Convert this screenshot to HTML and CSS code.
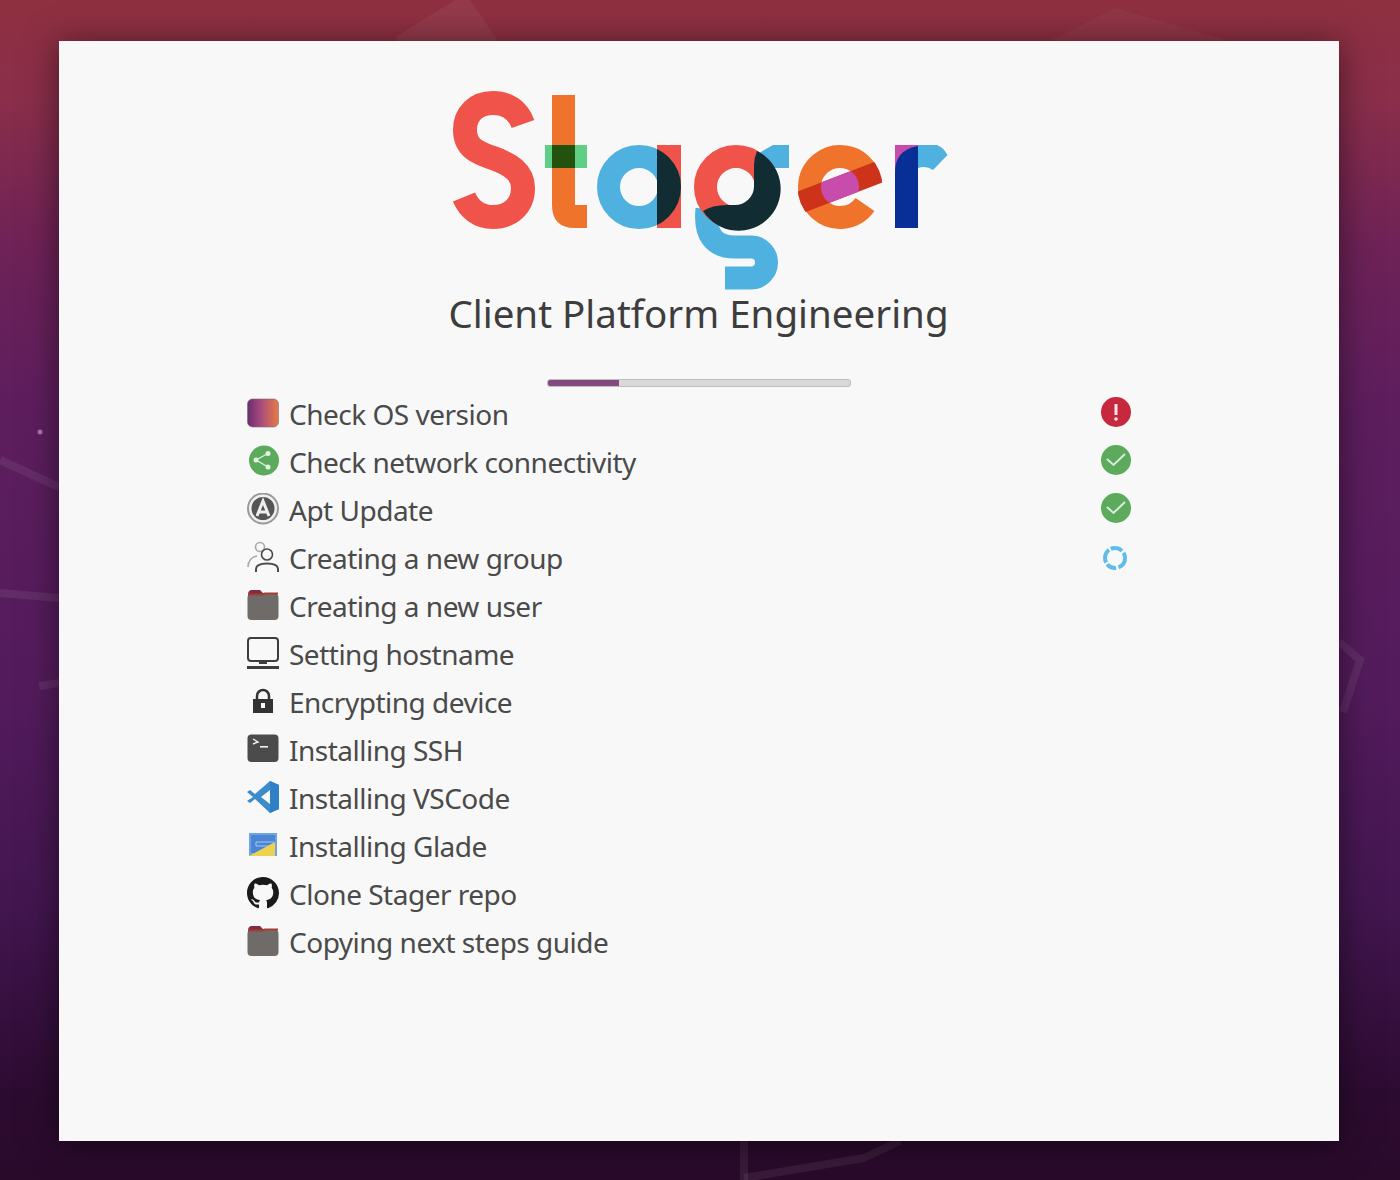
FILE: index.html
```html
<!doctype html>
<html lang="en">
<head>
	<meta charset="UTF-8">
	<title>Stager</title>

	<link rel="stylesheet" href="styles.css">
</head>
<body>
	<svg class="wallpaper" viewBox="0 0 1400 1180" aria-hidden="true">
		<g fill="none" stroke="#ffffff" stroke-opacity="0.07" stroke-width="8">
			<path d="M0 460 L59 487"/>
			<path d="M0 593 L59 598"/>
			<path d="M39 686 L59 683"/>
			<path d="M1339 642 L1360 660 L1343 712"/>
			<path d="M744 1141 L744 1180"/>
			<path d="M744 1178 L864 1158 L900 1141"/>
		</g>
		<path d="M397 41 L397 36 L455 0 L470 0 L498 41 Z" fill="#ffffff" fill-opacity="0.05"/>
		<path d="M1050 41 L1115 8 L1230 41 Z" fill="#ffffff" fill-opacity="0.03"/>
		<circle cx="40" cy="432" r="2.500" fill="#a678a8"/>
	</svg>

	<div class="window">
		<svg class="logo" viewBox="450 88 500 204" role="img" aria-label="Stager">
			<defs>
				<clipPath id="a-bar"><rect x="657" y="145" width="24" height="83"/></clipPath>
				<clipPath id="e-hole"><circle cx="840" cy="187" r="19"/></clipPath>
				<clipPath id="e-outer"><circle cx="840" cy="187" r="42.500"/></clipPath>
			</defs>

			<!-- S -->
			<path d="M523 124 C518 110 507 103 493 103 C476 103 465 114 465 130 C465 148 478 153 493 158 C510 164 523 172 523 188 C523 206 510 217 493 217 C479 217 469 209 464 197" fill="none" stroke="#ef5349" stroke-width="24"/>

			<!-- t -->
			<path d="M552 95 H575 V205 H587 V228 H575 Q552 228 552 205 Z" fill="#f0732b"/>
			<rect x="545" y="145" width="42" height="23" fill="#5fcf85"/>
			<rect x="552" y="145" width="23" height="23" fill="#23520f"/>

			<!-- a -->
			<circle cx="639" cy="187" r="30.500" fill="none" stroke="#4fb1e0" stroke-width="23"/>
			<rect x="657" y="145" width="24" height="83" fill="#ef5349"/>
			<circle cx="639" cy="187" r="30.500" fill="none" stroke="#112d33" stroke-width="23" clip-path="url(#a-bar)"/>
			<path d="M657 169 A19 19 0 0 1 657 205 Z" fill="#112d33"/>

			<!-- g -->
			<path d="M707 209 Q703 247 735 247 H751 A15.500 15.500 0 0 1 751 278 H725" fill="none" stroke="#4fb1e0" stroke-width="23"/>
			<path d="M759 153 L773 145 H789 V168 H775 Z" fill="#4fb1e0"/>
			<circle cx="736" cy="187" r="30.500" fill="none" stroke="#ef5349" stroke-width="23"/>
			<path d="M757 151 A42 42 0 1 1 703 211 Q712 205 727 205 L735 205 A19 19 0 0 0 754 187 V165 Q754 158 757 151 Z" fill="#112d33"/>

			<!-- e -->
			<path d="M865 204.500 A30.500 30.500 0 1 1 865.900 170.800" fill="none" stroke="#f0732b" stroke-width="23"/>
			<g clip-path="url(#e-outer)">
				<rect x="790" y="176" width="100" height="22" transform="rotate(-21 840 187)" fill="#cc331a"/>
			</g>
			<g clip-path="url(#e-hole)">
				<rect x="798" y="176" width="84" height="22" transform="rotate(-21 840 187)" fill="#c84cac"/>
			</g>

			<!-- r -->
			<rect x="895" y="145" width="23" height="26" fill="#c84cac"/>
			<path d="M895 228 V172 Q895 150 918 146 V228 Z" fill="#082f96"/>
			<path d="M918 145 H937 Q943 147 947.500 155 L933 170 Q926 165 918 168 Z" fill="#4fb1e0"/>
		</svg>

		<h1 class="title">Client Platform Engineering</h1>

		<div class="progress"><div class="progress-fill"></div></div>

		<ul class="tasks">
			<li class="task">
				<svg class="icon" viewBox="0 0 32 32">
					<defs>
						<linearGradient id="os" x1="0" x2="1" y1="0" y2="0">
							<stop offset="0" stop-color="#6a2c70"/>
							<stop offset="0.45" stop-color="#a94d7c"/>
							<stop offset="1" stop-color="#e87a45"/>
						</linearGradient>
					</defs>
					<rect x="0.500" y="2" width="31" height="28" rx="5" fill="url(#os)" stroke="#7a6a70" stroke-opacity="0.6"/>
				</svg>
				<span class="label">Check OS version</span>
				<svg class="icon status" viewBox="0 0 32 32">
					<circle cx="16" cy="15" r="15" fill="#c7283e"/>
					<path d="M16 7 V18" stroke="#f4e8ea" stroke-width="3"/>
					<circle cx="16" cy="22" r="1.800" fill="#f4e8ea"/>
				</svg>
			</li>
			<li class="task">
				<svg class="icon" viewBox="0 0 32 32">
					<circle cx="17" cy="15.500" r="15" fill="#5cab5c"/>
					<path d="M21 8.500 L9 15 L21 22" fill="none" stroke="#e4f2e4" stroke-width="1.300"/>
					<circle cx="21" cy="8.500" r="2.500" fill="#e4f2e4"/>
					<circle cx="9" cy="15" r="2.500" fill="#e4f2e4"/>
					<circle cx="21" cy="22" r="2.500" fill="#e4f2e4"/>
				</svg>
				<span class="label">Check network connectivity</span>
				<svg class="icon status" viewBox="0 0 32 32">
					<circle cx="16" cy="15" r="15" fill="#5cab5c"/>
					<path d="M7 14 L13.500 20 L25 9" fill="none" stroke="#dcecdc" stroke-width="2"/>
				</svg>
			</li>
			<li class="task">
				<svg class="icon" viewBox="0 0 32 32">
					<circle cx="16" cy="15.500" r="15" fill="#f0f0f0" stroke="#9a9a9a" stroke-width="2"/>
					<circle cx="16" cy="15.500" r="11.500" fill="#555555"/>
					<path d="M10 23 L16 8 L22 23 M11 19 H21" fill="none" stroke="#eeeeee" stroke-width="3"/>
				</svg>
				<span class="label">Apt Update</span>
				<svg class="icon status" viewBox="0 0 32 32">
					<circle cx="16" cy="15" r="15" fill="#5cab5c"/>
					<path d="M7 14 L13.500 20 L25 9" fill="none" stroke="#dcecdc" stroke-width="2"/>
				</svg>
			</li>
			<li class="task">
				<svg class="icon" viewBox="0 0 32 32" fill="none" stroke-width="1.600">
					<circle cx="13" cy="6" r="4.500" stroke="#a9a9a9"/>
					<path d="M1 26 C1 19 5 16 10 15" stroke="#a9a9a9"/>
					<circle cx="20" cy="13.500" r="5.500" stroke="#4a4a4a"/>
					<path d="M9 31 V28 C9 24 14 22.500 20 22.500 C26 22.500 31 24 31 28 V31" stroke="#4a4a4a" stroke-width="2"/>
				</svg>
				<span class="label">Creating a new group</span>
				<svg class="icon status" viewBox="0 0 32 32" fill="none">
					<circle cx="15" cy="17" r="10" stroke="#5fbde8" stroke-width="4" stroke-dasharray="12 2.500 10 2 14 2 12 2.500"/>
				</svg>
			</li>
			<li class="task">
				<svg class="icon" viewBox="0 0 32 32">
					<path d="M1 6 Q1 1 5 1 H13 L16 4 H27 Q31 4 31 8 V12 H1 Z" fill="#7a2f3a"/>
					<rect x="0.500" y="5" width="31" height="26" rx="4" fill="#6e6b68"/>
					<path d="M1 5.500 H15 L18 4.500 H31" fill="none" stroke="#a83a38" stroke-width="2"/>
				</svg>
				<span class="label">Creating a new user</span>
			</li>
			<li class="task">
				<svg class="icon" viewBox="0 0 32 32">
					<rect x="1" y="1" width="30" height="23" rx="3" fill="none" stroke="#3d3d3d" stroke-width="2"/>
					<rect x="12" y="24" width="8" height="3" fill="#3d3d3d"/>
					<rect x="0" y="29" width="32" height="3" fill="#3d3d3d"/>
				</svg>
				<span class="label">Setting hostname</span>
			</li>
			<li class="task">
				<svg class="icon" viewBox="0 0 32 32">
					<path d="M10 15 V11 A6 6 0 0 1 22 11 V15" fill="none" stroke="#333333" stroke-width="2.500"/>
					<rect x="6" y="14" width="20" height="14" fill="#333333"/>
					<rect x="14" y="18" width="4" height="5" fill="#f8f8f8"/>
				</svg>
				<span class="label">Encrypting device</span>
			</li>
			<li class="task">
				<svg class="icon" viewBox="0 0 32 32">
					<rect x="0.500" y="1.500" width="31" height="27.500" rx="4" fill="#4b4b4b"/>
					<path d="M6 6 L11 9 L6 11" fill="none" stroke="#f0f0f0" stroke-width="1.400"/>
					<rect x="13" y="13" width="8" height="1.600" fill="#f0f0f0"/>
				</svg>
				<span class="label">Installing SSH</span>
			</li>
			<li class="task">
				<svg class="icon" viewBox="0 0 32 32">
					<path d="M23 0 L32 4 V28 L23 32 L8 18 L3 22 L0 20 L6 16 L0 11 L3 9 L8 13 Z M23 9 L14 16 L23 23 Z" fill="#3c8ccb" fill-rule="evenodd"/>
					<path d="M23 0 L32 4 V28 L23 32 V23 L23 9 Z" fill="#2f80c4"/>
				</svg>
				<span class="label">Installing VSCode</span>
			</li>
			<li class="task">
				<svg class="icon" viewBox="0 0 32 32">
					<rect x="2" y="4" width="28" height="23" fill="#6ea4e4"/>
					<rect x="4" y="6" width="24" height="18" fill="#4a86d4"/>
					<path d="M9 13 V17 H24 M9 13 H27" fill="none" stroke="#a4c6f0" stroke-width="1"/>
					<path d="M2 27 L28 13 V27 Z" fill="#ecd24e"/>
				</svg>
				<span class="label">Installing Glade</span>
			</li>
			<li class="task">
				<svg class="icon" viewBox="0 0 16 16">
					<path d="M8 0C3.580 0 0 3.580 0 8c0 3.540 2.290 6.530 5.470 7.590.4.070.55-.17.55-.38 0-.19-.01-.82-.01-1.490-2.010.37-2.530-.49-2.690-.94-.09-.23-.48-.94-.82-1.130-.28-.15-.68-.52-.01-.53.630-.01 1.080.58 1.230.82.720 1.210 1.870.87 2.330.66.070-.52.280-.87.510-1.070-1.780-.2-3.640-.89-3.640-3.950 0-.87.310-1.590.820-2.150-.08-.2-.36-1.020.080-2.120 0 0 .670-.21 2.200.82.640-.18 1.320-.27 2-.27.680 0 1.360.09 2 .27 1.530-1.040 2.200-.82 2.200-.82.440 1.100.160 1.920.080 2.120.510.56.820 1.270.820 2.150 0 3.070-1.870 3.750-3.650 3.950.29.25.54.73.54 1.480 0 1.070-.01 1.930-.01 2.200 0 .21.15.46.55.38A8.013 8.013 0 0016 8c0-4.420-3.580-8-8-8z" fill="#1b1b1b"/>
				</svg>
				<span class="label">Clone Stager repo</span>
			</li>
			<li class="task">
				<svg class="icon" viewBox="0 0 32 32">
					<path d="M1 6 Q1 1 5 1 H13 L16 4 H27 Q31 4 31 8 V12 H1 Z" fill="#7a2f3a"/>
					<rect x="0.500" y="5" width="31" height="26" rx="4" fill="#6e6b68"/>
					<path d="M1 5.500 H15 L18 4.500 H31" fill="none" stroke="#a83a38" stroke-width="2"/>
				</svg>
				<span class="label">Copying next steps guide</span>
			</li>
		</ul>
	</div>
</body>
</html>
```

FILE: styles.css
```css
html {
	box-sizing: border-box;
}

*, *:before, *:after {
	box-sizing: inherit;
}

body {
	margin: 0;
	height: 1180px;
	padding: 41px 59px;
	overflow: hidden;
	position: relative;
	font-family: "Noto Sans", "Open Sans", sans-serif;
	color: #4a4a4a;
	background: linear-gradient(180deg, #8f3040 0, #8a2e4a 100px, #6e2257 250px, #5e1e5e 400px, #531b5c 700px, #431650 900px, #2c0b30 1100px, #2a0a2b 1180px);
}

.wallpaper {
	position: absolute;
	top: 0;
	left: 0;
	width: 1400px;
	height: 1180px;
}

.window {
	position: relative;
	width: 1280px;
	height: 1100px;
	padding-top: 47px;
	display: flex;
	flex-direction: column;
	align-items: center;
	background: #f8f8f8;
	box-shadow: 0 3px 32px rgba(0, 0, 0, 0.5);
}

.logo {
	display: block;
	width: 500px;
	height: 204px;
	margin-left: 1px;
	flex: none;
}

.title {
	margin: -2px 0 0 -1px;
	height: 47px;
	font-size: 38.500px;
	line-height: 47px;
	font-weight: 400;
	color: #3d3d3d;
}

.progress {
	width: 304px;
	height: 8px;
	margin-top: 42px;
	margin-left: -1px;
	background: #d9d9d9;
	border: 1px solid #bebebe;
	border-radius: 3px;
	overflow: hidden;
	flex: none;
}

.progress-fill {
	width: 71px;
	height: 100%;
	background: #84497f;
}

.tasks {
	list-style: none;
	margin: 2px 0 0 188px;
	padding: 0;
	width: 885px;
	align-self: flex-start;
}

.task {
	display: flex;
	align-items: center;
	height: 48px;
	gap: 10px;
}

.icon {
	width: 32px;
	height: 32px;
	flex: none;
}

.label {
	flex: 1;
	padding-top: 1px;
	font-size: 28px;
	line-height: 48px;
	letter-spacing: -0.5px;
}
```
